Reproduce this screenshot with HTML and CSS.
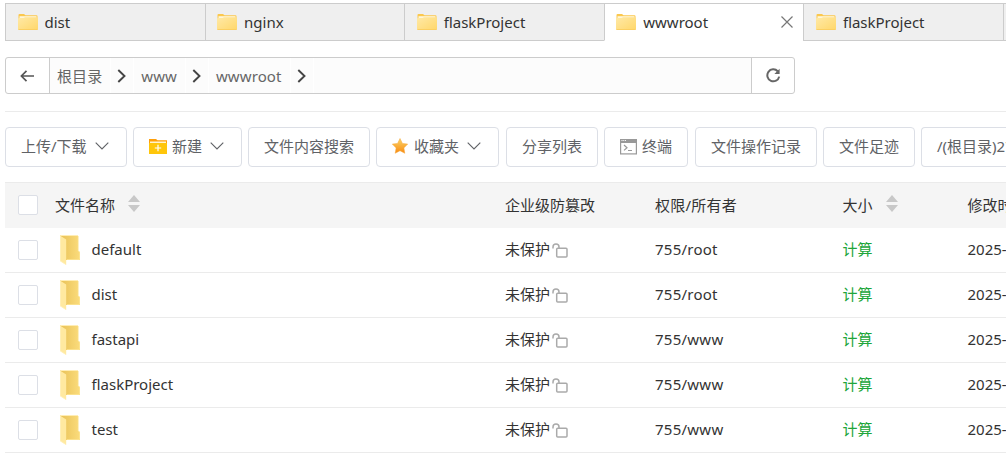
FILE: index.html
```html
<!DOCTYPE html>
<html lang="zh-CN">
<head>
    <meta charset="UTF-8">
    <meta name="viewport" content="width=device-width, initial-scale=1.0">
    <title>文件</title>
    <link rel="stylesheet" href="styles.css">
</head>
<body>
    <!-- icons -->
    <svg class="icon-defs" width="0" height="0">
        <defs>
            <linearGradient id="tabFill" x1="0" y1="0" x2="1" y2="1">
                <stop offset="0" stop-color="#ffe9a6"/>
                <stop offset="1" stop-color="#ffd76a"/>
            </linearGradient>
            <linearGradient id="backFill" x1="0" y1="0" x2="1" y2="0">
                <stop offset="0" stop-color="#e9c258"/>
                <stop offset="1" stop-color="#fbdc7c"/>
            </linearGradient>
            <linearGradient id="starFill" x1="0" y1="0" x2="0" y2="1">
                <stop offset="0" stop-color="#fbd568"/>
                <stop offset="1" stop-color="#f98a10"/>
            </linearGradient>
            <symbol id="tab-folder" viewBox="0 0 20 16">
                <path d="M0.5 1Q0.5 0 1.5 0H6L7.5 1.3H18.5Q19.5 1.3 19.5 2.3V8H0.5z" fill="#fbc84e"/>
                <path d="M1.5 2.2H18.5V5H1.5z" fill="#fff6d8"/>
                <path d="M0 5Q0 4 1 4H5.5L7 3.2H19Q20 3.2 20 4.2V15Q20 16 19 16H1Q0 16 0 15z" fill="url(#tabFill)"/>
                <path d="M0.5 15.5H19.5" stroke="#fbcf62" stroke-width="1"/>
            </symbol>
            <symbol id="row-folder" viewBox="0 0 20 30">
                <path d="M0.5 0H18V15.5L20 17.5V25H4z" fill="url(#backFill)"/>
                <path d="M0.5 0.5H18" stroke="#ffedb5" stroke-width="1"/>
                <path d="M18.2 1V15.5L19.5 17V24.5H7" fill="none" stroke="#fde494" stroke-width="0.8"/>
                <path d="M0 0.5L6.2 4.5V30L0 26z" fill="#ffe9a0"/>
                <path d="M0.4 1V26L5.8 29.4" fill="none" stroke="#fff0be" stroke-width="0.8"/>
            </symbol>
            <symbol id="down" viewBox="0 0 14 8">
                <path d="M0.7 0.7L7 7L13.3 0.7" fill="none" stroke="#606266" stroke-width="1.1"/>
            </symbol>
            <symbol id="next" viewBox="0 0 9 14">
                <path d="M1.3 1L7.5 7L1.3 13" fill="none" stroke="#444" stroke-width="1.9"/>
            </symbol>
            <symbol id="sort" viewBox="0 0 12 17">
                <path d="M6 0L12 7H0z M0 10H12L6 17z" fill="#c8c8c8"/>
            </symbol>
            <symbol id="unlock" viewBox="0 0 16 15">
                <path d="M1 5.5V4Q1 1 4 1Q7 1 7 4V5" fill="none" stroke="#aaa" stroke-width="1.5"/>
                <rect x="4.7" y="5.2" width="10.3" height="8.8" rx="1" fill="none" stroke="#aaa" stroke-width="1.5"/>
            </symbol>
        </defs>
    </svg>

    <div class="tabs">
        <div class="tab"><svg class="tab-icon"><use href="#tab-folder"/></svg><span>dist</span></div>
        <div class="tab"><svg class="tab-icon"><use href="#tab-folder"/></svg><span>nginx</span></div>
        <div class="tab"><svg class="tab-icon"><use href="#tab-folder"/></svg><span>flaskProject</span></div>
        <div class="tab active">
            <svg class="tab-icon"><use href="#tab-folder"/></svg><span>wwwroot</span>
            <svg class="tab-close" viewBox="0 0 12 12"><path d="M0.5 0.5L11.5 11.5M11.5 0.5L0.5 11.5" stroke="#777" stroke-width="1.2"/></svg>
        </div>
        <div class="tab"><svg class="tab-icon"><use href="#tab-folder"/></svg><span>flaskProject</span></div>
        <div class="tab last"></div>
    </div>

    <div class="path-bar">
        <div class="path-btn back">
            <svg width="14" height="12" viewBox="0 0 14 12"><path d="M14 6H1.5M6.5 0.9L1.4 6L6.5 11.1" fill="none" stroke="#555" stroke-width="1.7"/></svg>
        </div>
        <div class="path-list">
            <span class="crumb">根目录</span><span class="arrow"><svg><use href="#next"/></svg></span>
            <span class="crumb">www</span><span class="arrow"><svg><use href="#next"/></svg></span>
            <span class="crumb">wwwroot</span><span class="arrow"><svg><use href="#next"/></svg></span>
        </div>
        <div class="path-btn refresh">
            <svg width="15" height="15" viewBox="0 0 15 15"><path d="M11.7 3.2A6 6 0 1 0 13.2 8.6" fill="none" stroke="#666" stroke-width="2"/><path d="M13.6 0.8V6H8.4z" fill="#666"/></svg>
        </div>
    </div>

    <div class="toolbar">
        <div class="btn w-122">上传/下载<svg class="down"><use href="#down"/></svg></div>
        <div class="btn w-109">
            <svg class="new-icon" viewBox="0 0 18 15"><path d="M0 0H7L8.5 1.3H18V5H0z" fill="#ff9f0a"/><path d="M1 2.5H17V5H1z" fill="#fff3cf"/><path d="M0 4H18V15H0z" fill="#ffc60a"/><path d="M9 5.8V12.2M5.8 9H12.2" stroke="#fff" stroke-width="1.2"/></svg>
            新建<svg class="down"><use href="#down"/></svg>
        </div>
        <div class="btn w-122">文件内容搜索</div>
        <div class="btn w-123">
            <svg class="star-icon" viewBox="0 0 16 16"><path d="M8 0.5L10.4 5.4L15.7 6.1L11.9 9.9L12.8 15.3L8 12.7L3.2 15.3L4.1 9.9L0.3 6.1L5.6 5.4z" fill="url(#starFill)" stroke="#f5a73b" stroke-width="0.5"/></svg>
            收藏夹<svg class="down"><use href="#down"/></svg>
        </div>
        <div class="btn w-92 gap">分享列表</div>
        <div class="btn w-84">
            <svg class="term-icon" viewBox="0 0 17 16"><rect x="0.6" y="0.6" width="15.8" height="14.3" fill="#fff" stroke="#999" stroke-width="1.2"/><path d="M0 0H17V4H0z" fill="#999"/><path d="M1.5 1.5H6" stroke="#fff" stroke-width="1" stroke-dasharray="1 0.8"/><path d="M4 6L7 8.7L4 11.4M8 11.5H12" fill="none" stroke="#999" stroke-width="1.2"/></svg>
            终端
        </div>
        <div class="btn w-122 gap">文件操作记录</div>
        <div class="btn w-92">文件足迹</div>
        <div class="btn disk">/(根目录)27G</div>
    </div>

    <div class="table">
        <div class="row head">
            <div class="check"></div>
            <div class="name">文件名称<svg class="sort"><use href="#sort"/></svg></div>
            <div class="protect">企业级防篡改</div>
            <div class="owner">权限/所有者</div>
            <div class="size">大小<svg class="sort"><use href="#sort"/></svg></div>
            <div class="time">修改时间</div>
        </div>
        <div class="row">
            <div class="check"></div>
            <div class="name"><svg class="folder"><use href="#row-folder"/></svg>default</div>
            <div class="protect">未保护<svg class="unlock"><use href="#unlock"/></svg></div>
            <div class="owner">755/root</div>
            <div class="size link">计算</div>
            <div class="time">2025-</div>
        </div>
        <div class="row">
            <div class="check"></div>
            <div class="name"><svg class="folder"><use href="#row-folder"/></svg>dist</div>
            <div class="protect">未保护<svg class="unlock"><use href="#unlock"/></svg></div>
            <div class="owner">755/root</div>
            <div class="size link">计算</div>
            <div class="time">2025-</div>
        </div>
        <div class="row">
            <div class="check"></div>
            <div class="name"><svg class="folder"><use href="#row-folder"/></svg>fastapi</div>
            <div class="protect">未保护<svg class="unlock"><use href="#unlock"/></svg></div>
            <div class="owner">755/www</div>
            <div class="size link">计算</div>
            <div class="time">2025-</div>
        </div>
        <div class="row">
            <div class="check"></div>
            <div class="name"><svg class="folder"><use href="#row-folder"/></svg>flaskProject</div>
            <div class="protect">未保护<svg class="unlock"><use href="#unlock"/></svg></div>
            <div class="owner">755/www</div>
            <div class="size link">计算</div>
            <div class="time">2025-</div>
        </div>
        <div class="row">
            <div class="check"></div>
            <div class="name"><svg class="folder"><use href="#row-folder"/></svg>test</div>
            <div class="protect">未保护<svg class="unlock"><use href="#unlock"/></svg></div>
            <div class="owner">755/www</div>
            <div class="size link">计算</div>
            <div class="time">2025-</div>
        </div>
    </div>
</body>
</html>
```
FILE: styles.css
```css
* {
    margin: 0;
    padding: 0;
    box-sizing: border-box;
}

body {
    height: 461px;
    padding: 3px 0 0 5px;
    overflow: hidden;
    background: #fff;
    color: #333;
    font-family: "Noto Sans", "Noto Sans CJK SC", sans-serif;
    font-size: 15px;
    line-height: 20px;
}

svg {
    display: block;
    flex: none;
}

.icon-defs {
    position: absolute;
}

/* tabs */
.tabs {
    display: flex;
    height: 38px;
}

.tab {
    display: flex;
    flex: none;
    align-items: center;
    width: 199.6px;
    height: 38px;
    padding: 0 0 1px 11.5px;
    border: 1px solid #ccc;
    border-right: none;
    background: #efefef;
}

.tab.active {
    background: #fff;
    border-bottom-color: #fff;
}

.tab.last {
    flex: 1;
    width: auto;
    padding: 0;
}

.tab-icon {
    width: 20px;
    height: 16px;
    margin-right: 7px;
}

.tab-close {
    width: 12px;
    height: 12px;
    margin: 0 10px 0 auto;
}

/* path */
.path-bar {
    display: flex;
    width: 790px;
    height: 37px;
    margin-top: 16px;
    border: 1px solid #ccc;
    border-radius: 3px;
    color: #666;
}

.path-btn {
    display: flex;
    flex: none;
    align-items: center;
    justify-content: center;
    width: 43px;
}

.path-btn.back {
    padding-right: 1px;
}

.path-btn.refresh {
    width: 42px;
}

.path-list {
    display: flex;
    flex: 1;
    align-items: center;
    border: 1px solid #ccc;
    border-width: 0 1px;
    background: #fcfcfc;
}

.crumb {
    padding: 0 8px 0 7px;
    letter-spacing: 0.1px;
}

.arrow {
    display: flex;
    align-items: center;
    align-self: stretch;
    width: 24px;
    padding-left: 6px;
    border: 1px solid #fff;
    border-width: 0 1px;
}

.arrow svg {
    width: 9px;
    height: 14px;
}

/* toolbar */
.toolbar {
    display: flex;
    gap: 6px;
    margin-top: 17px;
    padding-top: 15px;
    border-top: 1px solid #ebebeb;
}

.btn {
    display: flex;
    flex: none;
    align-items: center;
    height: 40px;
    padding: 0 0 2px 15px;
    border: 1px solid #dcdfe6;
    border-radius: 4px;
    color: #606266;
    white-space: nowrap;
}

.w-84 { width: 84px; }
.w-92 { width: 92px; }
.w-109 { width: 109px; }
.w-122 { width: 122px; }
.w-123 { width: 123px; }

.gap {
    margin-left: 1px;
}

.btn.disk {
    flex: 1;
    min-width: 0;
    border-right: none;
    border-radius: 4px 0 0 4px;
    overflow: hidden;
}

.down {
    width: 14px;
    height: 8px;
    margin-left: 8px;
}

.new-icon {
    width: 18px;
    height: 15px;
    margin-right: 5px;
}

.star-icon {
    width: 16px;
    height: 16px;
    margin-right: 6px;
}

.term-icon {
    width: 17px;
    height: 16px;
    margin: 2px 5px 0 0;
}

/* table */
.table {
    margin-top: 15px;
    overflow: hidden;
}

.row {
    display: grid;
    grid-template-columns: 50px 450px 150px 187.5px 125px 1fr;
    align-items: center;
    height: 45px;
    border-bottom: 1px solid #ebebeb;
    white-space: nowrap;
}

.row.head {
    height: 46px;
    border-top: 1px solid #ebebeb;
    border-bottom-color: #f5f5f5;
    background: #f5f5f5;
}

.row > div {
    display: flex;
    align-items: center;
    min-width: 0;
    padding-bottom: 2px;
}

.row.head > div {
    padding-bottom: 0;
}

.row .check {
    width: 20px;
    height: 20px;
    margin-left: 13px;
    border: 1px solid #dcdfe6;
    border-radius: 2px;
    background: #fff;
}

.row .owner {
    letter-spacing: 0.25px;
}

.sort {
    width: 12px;
    height: 17px;
    margin: -3px 0 0 13px;
}

.folder {
    width: 20px;
    height: 30px;
    margin: 1px 11.5px 0 5px;
}

.unlock {
    width: 16px;
    height: 15px;
    margin: 3px 0 0 2px;
}

.row .link {
    color: #20a53a;
}
```
